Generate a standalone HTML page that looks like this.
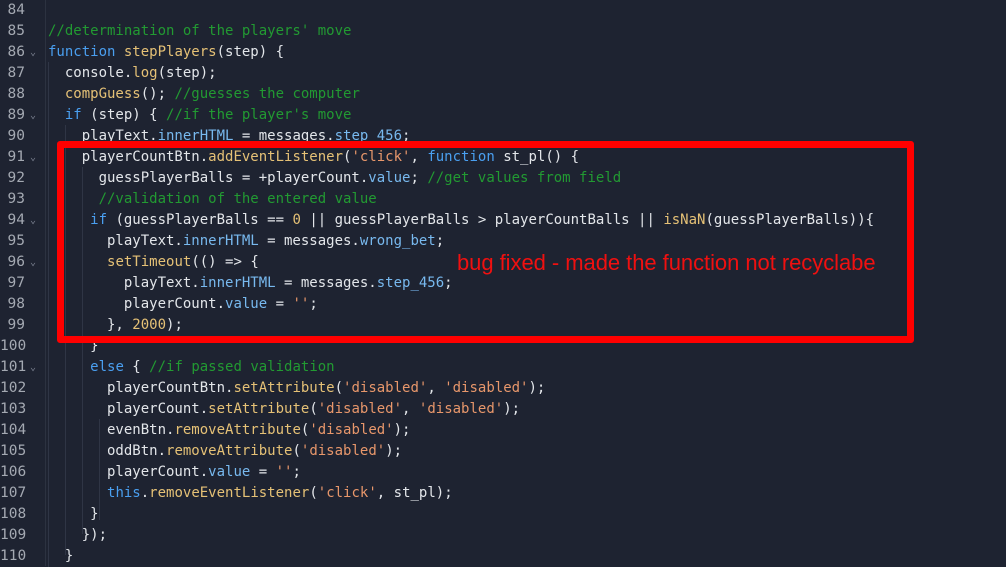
<!DOCTYPE html>
<html><head><meta charset="utf-8"><style>
html,body{margin:0;padding:0;width:1006px;height:566px;overflow:hidden;background:#1e2331;}
.l{position:absolute;left:0;height:21px;line-height:21px;width:1006px;font-family:"DejaVu Sans Mono","Liberation Mono",monospace;font-size:14px;white-space:pre;color:#e3e6ea;}
.n{position:absolute;left:0;width:25px;text-align:right;color:#a4a9b2;font-size:14.5px;}
.f{position:absolute;left:30px;color:#7b8190;font-size:10px;}
.c{position:absolute;left:48px;}
.k{color:#4a9ff0}.y{color:#e5c176}.g{color:#229a32}.s{color:#e8976b}.p{color:#78b9ef}.num{color:#e5c176}
.gut{position:absolute;left:45px;top:0;width:1px;height:566px;background:#2c3240;}
.ig{position:absolute;width:1px;background:#2f3545;}
.box{position:absolute;left:57px;top:141px;width:843px;height:188px;border:7px solid #ff0000;border-radius:3px;}
.msg{position:absolute;left:457px;top:250px;font-family:"Liberation Sans",sans-serif;font-size:22px;color:#f01010;letter-spacing:-0.05px;}
#w{position:absolute;left:0;top:1px;width:1006px;height:566px;}
</style></head><body>
<div class="gut"></div>
<div id="w">
<div class="ig" style="left:48px;top:61px;height:505px"></div>
<div class="ig" style="left:65px;top:124px;height:430px"></div>
<div class="ig" style="left:82px;top:166px;height:367px"></div>
<div class="ig" style="left:99px;top:418px;height:101px"></div>

<div class="l" style="top:-1px"><span class="n">84</span></div>
<div class="l" style="top:20px"><span class="n">85</span><span class="c"><span class="g">//determination of the players' move</span></span></div>
<div class="l" style="top:41px"><span class="n">86</span><span class="f">⌄</span><span class="c"><span class="k">function</span> <span class="y">stepPlayers</span>(step) {</span></div>
<div class="l" style="top:62px"><span class="n">87</span><span class="c">  console.<span class="y">log</span>(step);</span></div>
<div class="l" style="top:83px"><span class="n">88</span><span class="c">  <span class="y">compGuess</span>(); <span class="g">//guesses the computer</span></span></div>
<div class="l" style="top:104px"><span class="n">89</span><span class="f">⌄</span><span class="c">  <span class="k">if</span> (step) { <span class="g">//if the player's move</span></span></div>
<div class="l" style="top:125px"><span class="n">90</span><span class="c">    playText.<span class="p">innerHTML</span> = messages.<span class="p">step_456</span>;</span></div>
<div class="l" style="top:146px"><span class="n">91</span><span class="f">⌄</span><span class="c">    playerCountBtn.<span class="y">addEventListener</span>(<span class="s">'click'</span>, <span class="k">function</span> st_pl() {</span></div>
<div class="l" style="top:167px"><span class="n">92</span><span class="c">      guessPlayerBalls = +playerCount.<span class="p">value</span>; <span class="g">//get values from field</span></span></div>
<div class="l" style="top:188px"><span class="n">93</span><span class="c">      <span class="g">//validation of the entered value</span></span></div>
<div class="l" style="top:209px"><span class="n">94</span><span class="f">⌄</span><span class="c">     <span class="k">if</span> (guessPlayerBalls == <span class="num">0</span> || guessPlayerBalls &gt; playerCountBalls || <span class="y">isNaN</span>(guessPlayerBalls)){</span></div>
<div class="l" style="top:230px"><span class="n">95</span><span class="c">       playText.<span class="p">innerHTML</span> = messages.<span class="p">wrong_bet</span>;</span></div>
<div class="l" style="top:251px"><span class="n">96</span><span class="f">⌄</span><span class="c">       <span class="y">setTimeout</span>(() =&gt; {</span></div>
<div class="l" style="top:272px"><span class="n">97</span><span class="c">         playText.<span class="p">innerHTML</span> = messages.<span class="p">step_456</span>;</span></div>
<div class="l" style="top:293px"><span class="n">98</span><span class="c">         playerCount.<span class="p">value</span> = <span class="s">''</span>;</span></div>
<div class="l" style="top:314px"><span class="n">99</span><span class="c">       }, <span class="num">2000</span>);</span></div>
<div class="l" style="top:335px"><span class="n">100</span><span class="c">     }</span></div>
<div class="l" style="top:356px"><span class="n">101</span><span class="f">⌄</span><span class="c">     <span class="k">else</span> { <span class="g">//if passed validation</span></span></div>
<div class="l" style="top:377px"><span class="n">102</span><span class="c">       playerCountBtn.<span class="y">setAttribute</span>(<span class="s">'disabled'</span>, <span class="s">'disabled'</span>);</span></div>
<div class="l" style="top:398px"><span class="n">103</span><span class="c">       playerCount.<span class="y">setAttribute</span>(<span class="s">'disabled'</span>, <span class="s">'disabled'</span>);</span></div>
<div class="l" style="top:419px"><span class="n">104</span><span class="c">       evenBtn.<span class="y">removeAttribute</span>(<span class="s">'disabled'</span>);</span></div>
<div class="l" style="top:440px"><span class="n">105</span><span class="c">       oddBtn.<span class="y">removeAttribute</span>(<span class="s">'disabled'</span>);</span></div>
<div class="l" style="top:461px"><span class="n">106</span><span class="c">       playerCount.<span class="p">value</span> = <span class="s">''</span>;</span></div>
<div class="l" style="top:482px"><span class="n">107</span><span class="c">       <span class="k">this</span>.<span class="y">removeEventListener</span>(<span class="s">'click'</span>, st_pl);</span></div>
<div class="l" style="top:503px"><span class="n">108</span><span class="c">     }</span></div>
<div class="l" style="top:524px"><span class="n">109</span><span class="c">    });</span></div>
<div class="l" style="top:545px"><span class="n">110</span><span class="c">  }</span></div>
</div>
<div class="box"></div>
<div class="msg">bug fixed - made the function not recyclabe</div>
</body></html>
